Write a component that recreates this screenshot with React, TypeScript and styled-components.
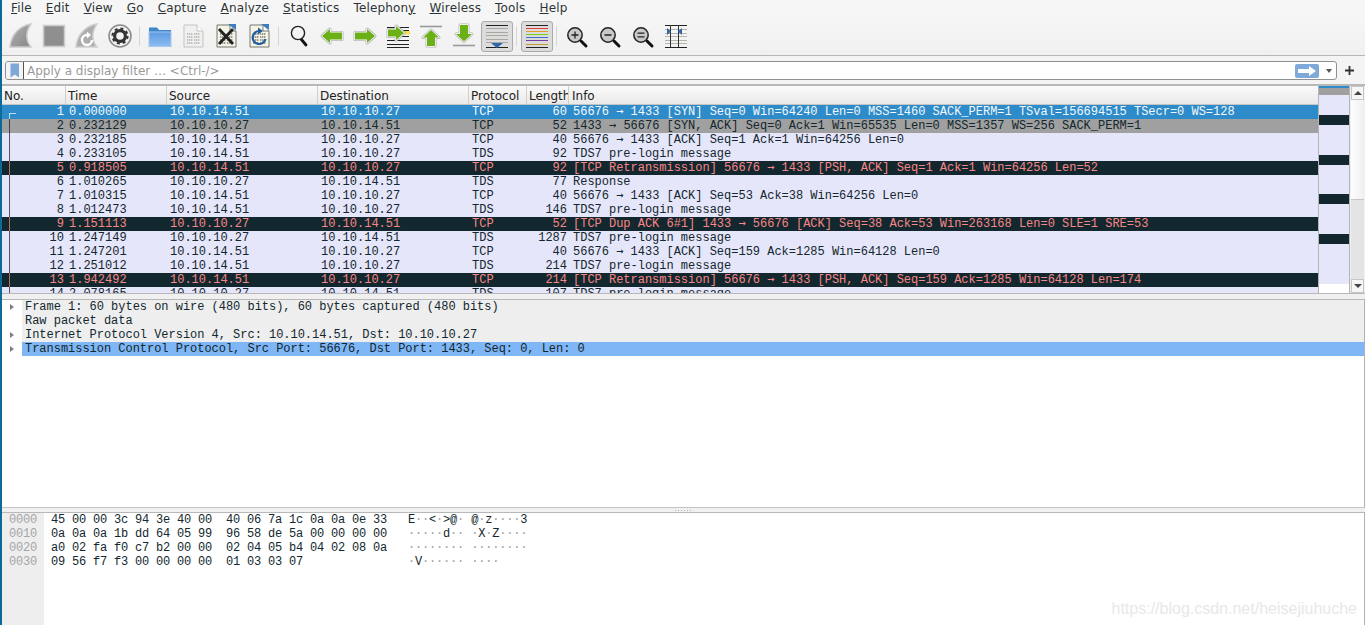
import React from 'react'
import styled, {createGlobalStyle} from 'styled-components'

const GlobalStyle = createGlobalStyle`
  html, body {
    margin: 0;
    padding: 0;
    height: 100%;
    overflow: hidden;
    background: #fff;
  }
  * {
    box-sizing: border-box;
  }
`

const UI_FONT = `'DejaVu Sans', sans-serif`
const MONO_FONT = `'Liberation Mono', monospace`

type RowKind = 'selected' | 'related' | 'normal' | 'bad'

interface Packet {
  no: number
  time: string
  src: string
  dst: string
  proto: string
  len: number
  info: string
  kind: RowKind
}

const packets: Packet[] = [
  {no: 1, time: '0.000000', src: '10.10.14.51', dst: '10.10.10.27', proto: 'TCP', len: 60, info: '56676 → 1433 [SYN] Seq=0 Win=64240 Len=0 MSS=1460 SACK_PERM=1 TSval=156694515 TSecr=0 WS=128', kind: 'selected'},
  {no: 2, time: '0.232129', src: '10.10.10.27', dst: '10.10.14.51', proto: 'TCP', len: 52, info: '1433 → 56676 [SYN, ACK] Seq=0 Ack=1 Win=65535 Len=0 MSS=1357 WS=256 SACK_PERM=1', kind: 'related'},
  {no: 3, time: '0.232185', src: '10.10.14.51', dst: '10.10.10.27', proto: 'TCP', len: 40, info: '56676 → 1433 [ACK] Seq=1 Ack=1 Win=64256 Len=0', kind: 'normal'},
  {no: 4, time: '0.233105', src: '10.10.14.51', dst: '10.10.10.27', proto: 'TDS', len: 92, info: 'TDS7 pre-login message', kind: 'normal'},
  {no: 5, time: '0.918505', src: '10.10.14.51', dst: '10.10.10.27', proto: 'TCP', len: 92, info: '[TCP Retransmission] 56676 → 1433 [PSH, ACK] Seq=1 Ack=1 Win=64256 Len=52', kind: 'bad'},
  {no: 6, time: '1.010265', src: '10.10.10.27', dst: '10.10.14.51', proto: 'TDS', len: 77, info: 'Response', kind: 'normal'},
  {no: 7, time: '1.010315', src: '10.10.14.51', dst: '10.10.10.27', proto: 'TCP', len: 40, info: '56676 → 1433 [ACK] Seq=53 Ack=38 Win=64256 Len=0', kind: 'normal'},
  {no: 8, time: '1.012473', src: '10.10.14.51', dst: '10.10.10.27', proto: 'TDS', len: 146, info: 'TDS7 pre-login message', kind: 'normal'},
  {no: 9, time: '1.151113', src: '10.10.10.27', dst: '10.10.14.51', proto: 'TCP', len: 52, info: '[TCP Dup ACK 6#1] 1433 → 56676 [ACK] Seq=38 Ack=53 Win=263168 Len=0 SLE=1 SRE=53', kind: 'bad'},
  {no: 10, time: '1.247149', src: '10.10.10.27', dst: '10.10.14.51', proto: 'TDS', len: 1287, info: 'TDS7 pre-login message', kind: 'normal'},
  {no: 11, time: '1.247201', src: '10.10.14.51', dst: '10.10.10.27', proto: 'TCP', len: 40, info: '56676 → 1433 [ACK] Seq=159 Ack=1285 Win=64128 Len=0', kind: 'normal'},
  {no: 12, time: '1.251012', src: '10.10.14.51', dst: '10.10.10.27', proto: 'TDS', len: 214, info: 'TDS7 pre-login message', kind: 'normal'},
  {no: 13, time: '1.942492', src: '10.10.14.51', dst: '10.10.10.27', proto: 'TCP', len: 214, info: '[TCP Retransmission] 56676 → 1433 [PSH, ACK] Seq=159 Ack=1285 Win=64128 Len=174', kind: 'bad'},
  {no: 14, time: '2.078165', src: '10.10.10.27', dst: '10.10.14.51', proto: 'TDS', len: 107, info: 'TDS7 pre-login message', kind: 'normal'},
]

const details = [
  {text: 'Frame 1: 60 bytes on wire (480 bits), 60 bytes captured (480 bits)', arrow: true},
  {text: 'Raw packet data', arrow: false},
  {text: 'Internet Protocol Version 4, Src: 10.10.14.51, Dst: 10.10.10.27', arrow: true},
  {text: 'Transmission Control Protocol, Src Port: 56676, Dst Port: 1433, Seq: 0, Len: 0', arrow: true, selected: true},
]

const hexLines = [
  {offset: '0000', hex: '45 00 00 3c 94 3e 40 00  40 06 7a 1c 0a 0a 0e 33', ascii: 'E··<·>@· @·z····3'},
  {offset: '0010', hex: '0a 0a 0a 1b dd 64 05 99  96 58 de 5a 00 00 00 00', ascii: '·····d·· ·X·Z····'},
  {offset: '0020', hex: 'a0 02 fa f0 c7 b2 00 00  02 04 05 b4 04 02 08 0a', ascii: '········ ········'},
  {offset: '0030', hex: '09 56 f7 f3 00 00 00 00  01 03 03 07            ', ascii: '·V······ ····'},
]

const minimap = [
  {h: 2, c: '#2e8bc9'},
  {h: 7, c: '#a0a0a0'},
  {h: 20, c: '#e6e6fa'},
  {h: 10, c: '#12272e'},
  {h: 30, c: '#e6e6fa'},
  {h: 10, c: '#12272e'},
  {h: 29, c: '#e6e6fa'},
  {h: 10, c: '#12272e'},
  {h: 30, c: '#e6e6fa'},
  {h: 10, c: '#12272e'},
  {h: 40, c: '#e6e6fa'},
  {h: 9, c: '#ffffff'},
]

const Icon = ({children}: {children: React.ReactNode}) => (
  <svg width='28' height='28' viewBox='0 0 28 28' fill='none'>
    {children}
  </svg>
)

const finPath = 'M3 25 C4 13 12 4 24 2 C19 9 18 18 24 25 Z'

const Paper = ({fill = '#f4f3e6', stroke = '#8d8d86'}: {fill?: string; stroke?: string}) => (
  <>
    <path d='M5 3 H18 L24 9 V25 H5 Z' fill={fill} stroke={stroke} />
    <path d='M18 3 V9 H24' fill='#fff' stroke={stroke} />
  </>
)

const Bits = ({color}: {color: string}) => (
  <g fill={color}>
    {[11, 14, 17, 20].map(y =>
      [8, 10, 12, 15, 17, 19].map(x => <rect key={`${x}-${y}`} x={x} y={y} width='1.4' height='2' />),
    )}
  </g>
)

const ArrowShape = ({d}: {d: string}) => (
  <>
    <path d={d} stroke='#b4b4b4' strokeWidth='3' strokeLinejoin='round' />
    <path d={d} stroke='#fff' strokeWidth='1.4' strokeLinejoin='round' />
    <path d={d} fill='#6cb018' />
  </>
)

const Lens = ({sign}: {sign: 'plus' | 'minus' | 'equal'}) => (
  <>
    <path d='M18 19 L23 24' stroke='#111' strokeWidth='3' strokeLinecap='round' />
    <circle cx='12' cy='13' r='7.2' fill='#c9c9c9' stroke='#222' strokeWidth='1.5' />
    {sign === 'plus' && <path d='M8.5 13 H15.5 M12 9.5 V16.5' stroke='#222' strokeWidth='1.3' />}
    {sign === 'minus' && <path d='M8.5 13 H15.5' stroke='#222' strokeWidth='1.5' />}
    {sign === 'equal' && <path d='M8.5 11.2 H15.5 M8.5 14.8 H15.5' stroke='#222' strokeWidth='1.3' />}
  </>
)

const HLines = ({ys, color}: {ys: number[]; color: string}) => (
  <>
    {ys.map(y => (
      <path key={y} d={`M3 ${y}.5 H25`} stroke={color} />
    ))}
  </>
)

function Toolbar() {
  return (
    <ToolRow>
      <ToolButton>
        <Icon>
          <defs>
            <linearGradient id='fin' x1='0' y1='0' x2='1' y2='1'>
              <stop offset='0' stopColor='#b4b4b4' />
              <stop offset='1' stopColor='#868686' />
            </linearGradient>
          </defs>
          <path d={finPath} fill='url(#fin)' stroke='#cccccc' strokeWidth='1.5' />
        </Icon>
      </ToolButton>
      <ToolButton>
        <Icon>
          <rect x='3.5' y='3.5' width='21' height='21' fill='#8f8f8f' stroke='#cdcdcd' strokeWidth='1.6' />
        </Icon>
      </ToolButton>
      <ToolButton>
        <Icon>
          <path d={finPath} fill='#adadad' stroke='#cfcfcf' strokeWidth='1.5' />
          <path d='M19 18 A5 5 0 1 1 14 13' stroke='#fff' strokeWidth='2.4' />
          <path d='M14 9.5 L18 13 L14 16.5 Z' fill='#fff' />
        </Icon>
      </ToolButton>
      <ToolButton>
        <Icon>
          <circle cx='14' cy='14' r='11' fill='#f2f2f2' stroke='#8e8e8e' strokeWidth='1.6' />
          <circle cx='14' cy='14' r='5.4' stroke='#333' strokeWidth='3.2' />
          <circle cx='14' cy='14' r='7.6' stroke='#333' strokeWidth='2' strokeDasharray='3 3' />
        </Icon>
      </ToolButton>
      <ToolSeparator />
      <ToolButton>
        <Icon>
          <defs>
            <linearGradient id='folder' x1='0' y1='0' x2='0' y2='1'>
              <stop offset='0' stopColor='#5b9ae0' />
              <stop offset='1' stopColor='#8fbdf0' />
            </linearGradient>
          </defs>
          <path d='M3 8 V5.5 H11 L13 8 H25 V11 H3 Z' fill='#3f86cc' />
          <rect x='3' y='10' width='22' height='14.5' fill='url(#folder)' stroke='#a9c8ea' />
        </Icon>
      </ToolButton>
      <ToolButton>
        <Icon>
          <Paper fill='#f0f0ee' stroke='#c4c4c4' />
          <Bits color='#c2c2c0' />
        </Icon>
      </ToolButton>
      <ToolButton>
        <Icon>
          <Paper stroke='#77776f' />
          <Bits color='#9a9a90' />
          <path d='M16 2 H24 V8 Z' fill='#3a7ec2' />
          <path d='M7 7 L21 22 M21 7 L7 22' stroke='#222' strokeWidth='2.8' />
        </Icon>
      </ToolButton>
      <ToolButton>
        <Icon>
          <Paper stroke='#77776f' />
          <Bits color='#9a9a90' />
          <path d='M16 2 H24 V8 Z' fill='#3a7ec2' />
          <path d='M20.5 17 A6.5 6.5 0 1 1 14.5 9' stroke='#1f5c9e' strokeWidth='2.2' />
          <path d='M13 5.5 L18 9 L13 12.5 Z' fill='#1f5c9e' />
        </Icon>
      </ToolButton>
      <ToolSeparator />
      <ToolButton>
        <Icon>
          <path d='M16 17 L21 23' stroke='#111' strokeWidth='2.8' strokeLinecap='round' />
          <circle cx='13' cy='11' r='6.6' fill='#f4f4f4' stroke='#222' strokeWidth='1.4' />
        </Icon>
      </ToolButton>
      <ToolButton>
        <Icon>
          <ArrowShape d='M4 14 L12 7 V10.5 H24 V17.5 H12 V21 Z' />
        </Icon>
      </ToolButton>
      <ToolButton>
        <Icon>
          <ArrowShape d='M24 14 L16 7 V10.5 H4 V17.5 H16 V21 Z' />
        </Icon>
      </ToolButton>
      <ToolButton>
        <Icon>
          <HLines ys={[5, 8, 14, 18, 22, 25]} color='#222' />
          <rect x='19' y='9' width='7' height='3.5' fill='#f5dc4d' />
          <ArrowShape d='M20 11 L12 4 V7.5 H4 V14.5 H12 V18 Z' />
        </Icon>
      </ToolButton>
      <ToolButton>
        <Icon>
          <path d='M3 4.5 H25' stroke='#999' strokeWidth='1.6' />
          <ArrowShape d='M14 8 L22 15.5 H18 V24 H10 V15.5 H6 Z' />
        </Icon>
      </ToolButton>
      <ToolButton>
        <Icon>
          <ArrowShape d='M14 19.5 L22 12 H18 V3 H10 V12 H6 Z' />
          <path d='M3 23.5 H25' stroke='#999' strokeWidth='1.6' />
        </Icon>
      </ToolButton>
      <ToolButton $active>
        <Icon>
          <HLines ys={[3, 25]} color='#222' />
          <HLines ys={[6, 10, 13, 17, 20]} color='#a9a99f' />
          <path d='M8 21 H20 L14 26 Z' fill='#2f67ad' />
        </Icon>
      </ToolButton>
      <ToolSeparator />
      <ToolButton $active>
        <Icon>
          <HLines ys={[3, 25]} color='#222' />
          <HLines ys={[6]} color='#e03a3a' />
          <HLines ys={[9]} color='#e89a2e' />
          <HLines ys={[12]} color='#76d016' />
          <HLines ys={[15]} color='#3d6fc4' />
          <HLines ys={[18]} color='#7a3c9e' />
          <HLines ys={[22]} color='#c49a2a' />
        </Icon>
      </ToolButton>
      <ToolSeparator />
      <ToolButton>
        <Icon>
          <Lens sign='plus' />
        </Icon>
      </ToolButton>
      <ToolButton>
        <Icon>
          <Lens sign='minus' />
        </Icon>
      </ToolButton>
      <ToolButton>
        <Icon>
          <Lens sign='equal' />
        </Icon>
      </ToolButton>
      <ToolButton>
        <Icon>
          <HLines ys={[3, 25]} color='#222' />
          <HLines ys={[7, 11, 14, 18, 21]} color='#b5b5ad' />
          <path d='M8.5 3 V25 M16.5 3 V25' stroke='#333' />
          <path d='M5 6 L9 9.5 L5 13 Z M20 6 L16 9.5 L20 13 Z' fill='#2f67ad' />
        </Icon>
      </ToolButton>
    </ToolRow>
  )
}

const menu: [string, string, string][] = [
  ['', 'F', 'ile'],
  ['', 'E', 'dit'],
  ['', 'V', 'iew'],
  ['', 'G', 'o'],
  ['', 'C', 'apture'],
  ['', 'A', 'nalyze'],
  ['', 'S', 'tatistics'],
  ['Telephon', 'y', ''],
  ['', 'W', 'ireless'],
  ['', 'T', 'ools'],
  ['', 'H', 'elp'],
]

// the arrow comes out of DejaVu in the reference, Liberation's one is too short
const withArrows = (text: string) =>
  text.split('→').map((part, i) => (
    <React.Fragment key={i}>
      {i > 0 && <InfoArrow>→</InfoArrow>}
      {part}
    </React.Fragment>
  ))

function App() {
  return (
    <>
      <GlobalStyle />
      <Window>
        <MenuBar>
          {menu.map(([before, key, after]) => (
            <MenuItem key={before + key + after}>
              {before}
              <u>{key}</u>
              {after}
            </MenuItem>
          ))}
        </MenuBar>
        <Toolbar />
        <FilterBar>
          <FilterBox>
            <BookmarkButton>
              <svg width='10' height='15' viewBox='0 0 10 15'>
                <path d='M0.5 0.5 H9 V14.5 L4.8 11.5 L0.5 14.5 Z' fill='#7ea8d8' />
              </svg>
            </BookmarkButton>
            <FilterPlaceholder>Apply a display filter … &lt;Ctrl-/&gt;</FilterPlaceholder>
            <ApplyButton>
              <svg width='18' height='10' viewBox='0 0 18 10'>
                <path d='M0 3 H11 V0 L18 5 L11 10 V7 H0 Z' fill='#fff' />
              </svg>
            </ApplyButton>
            <FilterCaret />
          </FilterBox>
          <PlusButton>
            <svg width='9' height='9' viewBox='0 0 9 9'>
              <path d='M4.5 0 V9 M0 4.5 H9' stroke='#333' strokeWidth='1.8' />
            </svg>
          </PlusButton>
        </FilterBar>
        <PacketPane>
          <PacketList>
            <HeaderRow>
              <HeaderCell>No.</HeaderCell>
              <HeaderCell>Time</HeaderCell>
              <HeaderCell>Source</HeaderCell>
              <HeaderCell>Destination</HeaderCell>
              <HeaderCell>Protocol</HeaderCell>
              <HeaderCell>Length</HeaderCell>
              <HeaderCell>Info</HeaderCell>
            </HeaderRow>
            {packets.map(p => (
              <PacketRow key={p.no} $kind={p.kind}>
                <TreeLine $first={p.no === 1} />
                <NumCell>{p.no}</NumCell>
                <TextCell>{p.time}</TextCell>
                <TextCell>{p.src}</TextCell>
                <TextCell>{p.dst}</TextCell>
                <TextCell>{p.proto}</TextCell>
                <NumCell>{p.len}</NumCell>
                <InfoCell>{withArrows(p.info)}</InfoCell>
              </PacketRow>
            ))}
          </PacketList>
          <Minimap>
            {minimap.map((m, i) => (
              <MinimapBar key={i} $h={m.h} $c={m.c} />
            ))}
          </Minimap>
          <ScrollBar>
            <ScrollButton>
              <ArrowUp />
            </ScrollButton>
            <ScrollThumb />
            <ScrollTrack />
            <ScrollButton>
              <ArrowDown />
            </ScrollButton>
          </ScrollBar>
        </PacketPane>
        <DetailPane>
          {details.map(d => (
            <DetailRow key={d.text}>
              <DetailGutter>{d.arrow && <Expander />}</DetailGutter>
              <DetailText $selected={d.selected}>{d.text}</DetailText>
            </DetailRow>
          ))}
        </DetailPane>
        <Splitter>
          <SplitterGrip />
        </Splitter>
        <HexPane>
          <HexGutter>
            {hexLines.map(l => (
              <HexLine key={l.offset}>{l.offset}</HexLine>
            ))}
          </HexGutter>
          <HexBytes>
            {hexLines.map(l => (
              <HexLine key={l.offset}>{l.hex}</HexLine>
            ))}
          </HexBytes>
          <HexAscii>
            {hexLines.map(l => (
              <HexLine key={l.offset}>
                {l.ascii.split('').map((ch, i) => (ch === '·' ? <Dot key={i}>{ch}</Dot> : ch))}
              </HexLine>
            ))}
          </HexAscii>
          <Watermark>https://blog.csdn.net/heisejiuhuche</Watermark>
        </HexPane>
      </Window>
    </>
  )
}

const Window = styled.div`
  width: 1365px;
  height: 625px;
  display: flex;
  flex-direction: column;
  overflow: hidden;
  background: #f0f0f0;
  border-left: 2px solid #0b6b98;
  font-family: ${UI_FONT};
  color: #2e3436;
`

const MenuBar = styled.div`
  height: 17px;
  flex: none;
  display: flex;
  align-items: center;
  padding: 0 0 2px 2px;
  background: #f6f6f6;
  font-size: 12px;
  line-height: 14px;
`

const MenuItem = styled.span`
  padding: 0 7px;
  letter-spacing: 0.16px;
`

const ToolRow = styled.div`
  height: 39px;
  flex: none;
  display: flex;
  align-items: center;
  padding-left: 2px;
  background: linear-gradient(#f6f6f6, #f0f0f0);
  border-bottom: 1px solid #b6b6b6;
`

const ToolButton = styled.div<{$active?: boolean}>`
  width: ${p => (p.$active ? '32px' : '33px')};
  margin-left: ${p => (p.$active ? '1px' : '0')};
  height: 31px;
  flex: none;
  display: flex;
  align-items: center;
  justify-content: center;
  border-radius: 3px;
  border: 1px solid ${p => (p.$active ? '#aaaaaa' : 'transparent')};
  background: ${p => (p.$active ? '#dcdcdc' : 'transparent')};
`

const ToolSeparator = styled.div`
  width: 1px;
  height: 20px;
  flex: none;
  margin: 0 3px;
  background: #d6d6d6;
`

const FilterBar = styled.div`
  height: 30px;
  flex: none;
  display: flex;
  align-items: center;
  padding: 1px 0 0 3px;
  background: #f4f4f4;
  border-bottom: 2px solid #b8b8b8;
`

const FilterBox = styled.div`
  width: 1332px;
  height: 19px;
  display: flex;
  align-items: center;
  background: #fff;
  border: 1px solid #8f8f8f;
  border-radius: 3px;
`

const BookmarkButton = styled.div`
  width: 18px;
  height: 17px;
  flex: none;
  display: flex;
  align-items: center;
  justify-content: center;
  border-right: 1px solid #555;
  background: #f4f4f4;
  border-radius: 3px 0 0 3px;
`

const FilterPlaceholder = styled.div`
  flex: 1;
  padding-left: 3px;
  font-size: 12px;
  color: #9a9a9a;
  white-space: pre;
`

const ApplyButton = styled.div`
  width: 24px;
  height: 14px;
  flex: none;
  display: flex;
  align-items: center;
  justify-content: center;
  background: #7fa9d9;
  border-radius: 2px;
`

const FilterCaret = styled.div`
  width: 0;
  height: 0;
  flex: none;
  margin: 0 4px 0 7px;
  border-left: 3.5px solid transparent;
  border-right: 3.5px solid transparent;
  border-top: 4px solid #555;
`

const PlusButton = styled.div`
  width: 24px;
  display: flex;
  justify-content: center;
`

const PacketPane = styled.div`
  height: 208px;
  flex: none;
  display: flex;
  background: #f0f0f0;
  border-bottom: 1px solid #b8b8b8;
`

const PacketList = styled.div`
  width: 1317px;
  flex: none;
  overflow: hidden;
  background: #e6e6fa;
  border-right: 1px solid #b4b4b4;
`

const columns = 'grid-template-columns: 64px 101px 151px 151px 58px 42px 1fr;'

const HeaderRow = styled.div`
  height: 19px;
  display: grid;
  ${columns}
  background: linear-gradient(#fbfbfb, #e9e9e9);
  border-bottom: 1px solid #c4c4c4;
`

const HeaderCell = styled.div`
  padding-left: 2px;
  font-size: 12px;
  line-height: 20px;
  overflow: hidden;
  white-space: nowrap;
  border-right: 1px solid #cfcfcf;
  color: #222;
  &:last-child {
    padding-left: 3px;
    border-right: 0;
  }
`

const rowColors: Record<RowKind, {bg: string; fg: string}> = {
  selected: {bg: '#2e8bc9', fg: '#f2f8fc'},
  related: {bg: '#a0a0a0', fg: '#12272e'},
  normal: {bg: '#e6e6fa', fg: '#12272e'},
  bad: {bg: '#12272e', fg: '#f78787'},
}

const PacketRow = styled.div<{$kind: RowKind}>`
  position: relative;
  height: 14px;
  display: grid;
  ${columns}
  background: ${p => rowColors[p.$kind].bg};
  color: ${p => rowColors[p.$kind].fg};
  font-family: ${MONO_FONT};
  font-size: 12px;
  line-height: 14px;
  white-space: pre;
`

const TreeLine = styled.span<{$first?: boolean}>`
  position: absolute;
  left: 7px;
  top: ${p => (p.$first ? '8px' : '0')};
  bottom: 0;
  width: ${p => (p.$first ? '7px' : '1px')};
  border-left: 1px solid currentColor;
  border-top: ${p => (p.$first ? '1px solid currentColor' : '0')};
  opacity: 0.75;
`

const NumCell = styled.span`
  text-align: right;
  padding-right: 2px;
`

const TextCell = styled.span`
  padding-left: 3px;
  overflow: hidden;
`

const InfoCell = styled.span`
  padding-left: 4px;
  letter-spacing: -0.01px;
  overflow: hidden;
`

const InfoArrow = styled.span`
  font-family: 'DejaVu Sans Mono', monospace;
  line-height: 0;
`

const Minimap = styled.div`
  width: 31px;
  flex: none;
  display: flex;
  flex-direction: column;
  background: #fff;
  border-right: 1px solid #b4b4b4;
`

const MinimapBar = styled.div<{$h: number; $c: string}>`
  height: ${p => p.$h}px;
  flex: none;
  background: ${p => p.$c};
`

const ScrollBar = styled.div`
  width: 13px;
  margin-left: 1px;
  flex: none;
  display: flex;
  flex-direction: column;
  background: #e4e4e4;
`

const ScrollButton = styled.div`
  height: 14px;
  flex: none;
  display: flex;
  align-items: center;
  justify-content: center;
  background: #f6f6f6;
  border: 1px solid #c6c6c6;
`

const ArrowUp = styled.span`
  width: 0;
  height: 0;
  border-left: 4px solid transparent;
  border-right: 4px solid transparent;
  border-bottom: 4px solid #444;
`

const ArrowDown = styled.span`
  width: 0;
  height: 0;
  border-left: 4px solid transparent;
  border-right: 4px solid transparent;
  border-top: 4px solid #444;
`

const ScrollThumb = styled.div`
  height: 100px;
  flex: none;
  background: linear-gradient(to right, #fdfdfd, #f0f0f0);
  border-bottom: 1px solid #c6c6c6;
`

const ScrollTrack = styled.div`
  flex: 1;
  background: #e4e4e4;
`

const DetailPane = styled.div`
  height: 208px;
  flex: none;
  margin-top: 5px;
  background: #fff;
  border-top: 1px solid #b8b8b8;
  border-right: 1px solid #b0b0b0;
  font-family: ${MONO_FONT};
  font-size: 12px;
  letter-spacing: -0.025px;
  line-height: 14px;
  color: #12272e;
`

const DetailRow = styled.div`
  height: 14px;
  display: flex;
`

const DetailGutter = styled.div`
  width: 20px;
  flex: none;
  display: flex;
  align-items: center;
  padding-left: 8px;
`

const Expander = styled.span`
  width: 0;
  height: 0;
  border-top: 3.5px solid transparent;
  border-bottom: 3.5px solid transparent;
  border-left: 4px solid #808080;
`

const DetailText = styled.div<{$selected?: boolean}>`
  flex: 1;
  padding-left: 3px;
  background: ${p => (p.$selected ? '#7fb6f6' : '#eeeeee')};
`

const Splitter = styled.div`
  height: 5px;
  flex: none;
  display: flex;
  justify-content: center;
  padding-top: 1px;
  background: #f0f0f0;
  border-top: 1px solid #c4c4c4;
`

const SplitterGrip = styled.div`
  width: 18px;
  height: 1px;
  margin-top: 1px;
  background: repeating-linear-gradient(to right, #b0b0b0 0 1px, transparent 1px 3px);
`

const HexPane = styled.div`
  position: relative;
  flex: 1;
  display: flex;
  background: #fff;
  border-top: 1px solid #b8b8b8;
  border-right: 1px solid #b0b0b0;
  font-family: ${MONO_FONT};
  font-size: 12px;
  letter-spacing: -0.2px;
  color: #12272e;
`

const HexLine = styled.div`
  height: 14px;
  line-height: 14px;
  white-space: pre;
`

const HexGutter = styled.div`
  width: 42px;
  flex: none;
  padding-left: 7px;
  background: #eeeeee;
  color: #a6a6a6;
`

const HexBytes = styled.div`
  width: 357px;
  flex: none;
  padding-left: 7px;
`

const HexAscii = styled.div`
  padding-left: 7px;
`

const Dot = styled.span`
  color: #a0a0a0;
`

const Watermark = styled.div`
  position: absolute;
  right: 7px;
  bottom: 7px;
  font-family: 'Liberation Sans', sans-serif;
  font-size: 16px;
  letter-spacing: 0;
  color: #e8e8e8;
`

export default App
